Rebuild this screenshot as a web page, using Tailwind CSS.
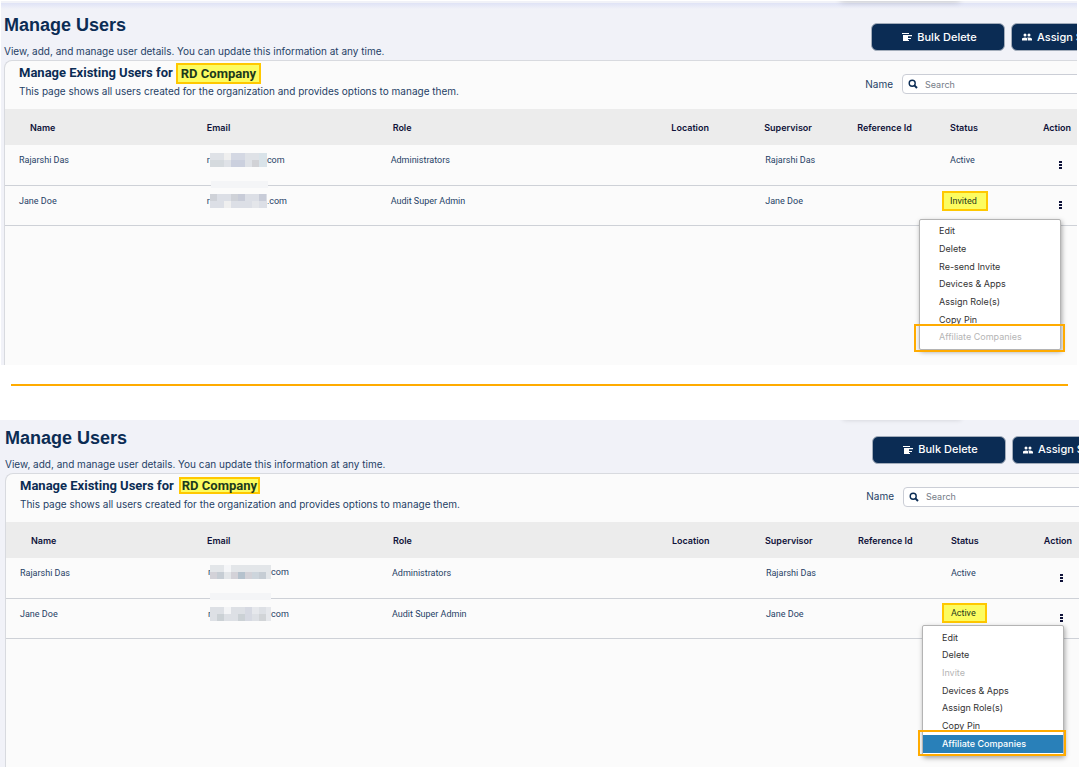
<!DOCTYPE html>
<html lang="en">
<head>
  <meta charset="UTF-8" />
  <meta name="viewport" content="width=device-width, initial-scale=1">
  <title>Manage Users</title>
  <script src="https://cdn.jsdelivr.net/npm/@tailwindcss/browser@4"></script>
</head>
<body class="bg-white font-['Inter',sans-serif] text-[#1f3f66] overflow-x-hidden">

  <!-- Invited user: affiliate companies disabled -->
  <section class="relative overflow-hidden mt-px ml-px mr-[2px] pl-[3px] pt-[11px] bg-[#f1f2f8]">
    <div class="absolute inset-x-0 top-[2px] h-[6px] bg-linear-to-b from-[#dfe3f6] to-[#f1f2f8]"></div>
    <div class="absolute -top-2 right-[117px] w-[120px] h-2 rounded-full shadow-[0_1px_6px_#0000002e]"></div>
    <header class="relative flex justify-between pb-[2px]">
      <div>
        <h1 class="font-['Liberation_Sans',sans-serif] font-bold text-[18px] leading-[26px] text-[#0b2c54]">Manage Users</h1>
        <p class="mt-[6px] text-[10px] leading-[14px]">View, add, and manage user details. You can update this information at any time.</p>
      </div>
      <div class="flex shrink-0 gap-[6px] mt-[11px] -mr-17">
        <button type="button" class="flex items-center justify-center gap-[5px] w-[134px] h-7 pl-[3px] rounded-md border border-[#a3adbb] bg-[#0b2c54] text-white text-[11px] font-medium">
          <svg class="w-[10px] h-[10px]" viewBox="0 0 10 10" fill="currentColor"><path d="M0 1h7v1H0zM1 3h9v1.300H1zM1 4h5v5H1zM6 6h3v1H6zM6 8h1v1H6z"/></svg>
          Bulk Delete
        </button>
        <button type="button" class="flex items-center gap-[5px] w-[134px] h-7 pl-[10px] rounded-md border border-[#a3adbb] bg-[#0b2c54] text-white text-[11px] font-medium whitespace-nowrap">
          <svg class="w-[10px] h-[10px]" viewBox="0 0 10 10" fill="currentColor"><circle cx="3" cy="3" r="1.500"/><circle cx="7" cy="3" r="1.500"/><path d="M0 8.500V7q0-1.500 3-1.500 1.500 0 2 .8V8.500zM5.700 8.500V7q0-1-.6-1.400 4.900-.6 4.900 1.400v1.500z"/></svg>
          Assign Supervisor
        </button>
      </div>
    </header>

    <div class="relative border-l border-t border-[#d8dadf] rounded-tl-lg bg-[#fbfbfb] pb-[139px]">
      <div class="flex justify-between pl-[14px] pb-3">
        <div>
          <h2 class="flex items-center gap-[3px] h-6 font-[Roboto,sans-serif] font-bold text-[13px] text-[#0b2c54]">Manage Existing Users for<mark class="border-2 border-[#ffc800] bg-[#fcfc60] px-[3px] leading-[17px] text-[#1c3a1c]">RD Company</mark></h2>
          <p class="text-[10px] leading-3">This page shows all users created for the organization and provides options to manage them.</p>
        </div>
        <div class="flex items-center shrink-0 gap-[9px] h-5 mt-[13px] -mr-17">
          <label for="search-invited" class="text-[10px]">Name</label>
          <div class="relative">
            <svg class="absolute left-[6px] top-[5px] w-[10px] h-[10px] text-[#0b2c54]" viewBox="0 0 10 10" fill="none" stroke="currentColor" stroke-width="1.400"><circle cx="4.200" cy="4.200" r="3"/><path d="M6.400 6.400L9 9" stroke-width="2"/></svg>
            <input id="search-invited" type="text" placeholder="Search" class="block w-[243px] h-5 rounded-sm border border-[#cbced6] bg-white pl-[22px] text-[9px] placeholder:text-[#757c87]">
          </div>
        </div>
      </div>

      <table class="w-[104%] table-fixed text-left text-[9px] leading-3">
        <thead>
          <tr class="h-9 bg-[#ececec] text-[#10133a]">
            <th class="w-2/12 pt-[2px] pl-[25px] font-semibold">Name</th>
            <th class="w-2/12 pt-[2px] pl-4 font-semibold">Email</th>
            <th class="w-3/12 pt-[2px] pl-4 font-semibold">Role</th>
            <th class="w-1/12 pt-[2px] pl-4 font-semibold">Location</th>
            <th class="w-1/12 pt-[2px] pl-4 font-semibold">Supervisor</th>
            <th class="w-1/12 pt-[2px] pl-4 font-semibold">Reference Id</th>
            <th class="w-1/12 pt-[2px] pl-4 font-semibold">Status</th>
            <th class="w-1/12 pt-[2px] pl-4 font-semibold">Action</th>
          </tr>
        </thead>
        <tbody>
          <tr class="h-10 border-b border-[#ced1d7] align-top font-[Roboto,sans-serif]">
            <td class="pl-[14px] pt-[9px]">Rajarshi Das</td>
            <td class="relative pl-4 pt-2">
              <div class="flex items-center">r<svg class="w-[57px] h-[14px]" viewBox="0 0 57 14" shape-rendering="crispEdges"><path fill="#dfe2e7" d="M0 0h57v14H0z"/><path fill="#d5dade" d="M0 7h14v7H0z"/><path fill="#efefef" d="M14 0h7v7h-7z"/><path fill="#d4d8e3" d="M21 0h14v7H21z"/><path fill="#cbd0de" d="M21 7h14v7H21z"/><path fill="#d1d2d6" d="M42 7h7v7h-7z"/><path fill="#d9e3e9" d="M49 0h8v14h-8z"/></svg>com</div>
              <div class="absolute left-5 -bottom-[3px] w-[57px] h-[7px] bg-[#f4f5f7]"></div>
            </td>
            <td class="pl-[14px] pt-[9px]">Administrators</td>
            <td></td>
            <td class="pl-[17px] pt-[9px]">Rajarshi Das</td>
            <td></td>
            <td class="pl-4 pt-[9px]">Active</td>
            <td class="pl-8 pt-4"><button type="button" aria-label="Actions" class="block"><svg class="w-[3px] h-[9px]" viewBox="0 0 3 9" fill="#10133a"><path d="M0 0h3v2H0zM0 3h3v2H0zM0 6h3v2H0z"/></svg></button></td>
          </tr>
          <tr class="h-10 border-b border-[#ced1d7] align-top font-[Roboto,sans-serif]">
            <td class="pl-[14px] pt-[9px]">Jane Doe</td>
            <td class="pl-4 pt-2">
              <div class="flex items-center">r<svg class="w-[57px] h-[14px]" viewBox="0 0 57 14" shape-rendering="crispEdges"><path fill="#dcdfe6" d="M0 0h57v14H0z"/><path fill="#cfd2d8" d="M0 0h7v7H0zM21 0h7v7h-7z"/><path fill="#efefef" d="M14 7h7v7h-7z"/><path fill="#c8ccd8" d="M28 0h7v7h-7zM49 0h7v7h-7z"/><path fill="#e4e6ea" d="M42 7h7v7h-7z"/></svg>.com</div>
            </td>
            <td class="pl-[14px] pt-[9px]">Audit Super Admin</td>
            <td></td>
            <td class="pl-[17px] pt-[9px]">Jane Doe</td>
            <td></td>
            <td class="pl-2 pt-[5px]"><mark class="block w-[46px] border-2 border-[#ffc800] bg-[#fcfc60] pl-[6px] leading-4 text-[#1c3a1c]">Invited</mark></td>
            <td class="pl-8 pt-[15px]"><button type="button" aria-label="Actions" class="block"><svg class="w-[3px] h-[9px]" viewBox="0 0 3 9" fill="#10133a"><path d="M0 0h3v2H0zM0 3h3v2H0zM0 6h3v2H0z"/></svg></button></td>
          </tr>
        </tbody>
      </table>

      <div class="absolute top-[158px] right-4 w-[142px] h-[131px] pt-[2px] pb-[3px] flex flex-col border border-[#b4b4b4] rounded-xs bg-white shadow-[1px_2px_5px_#00000059] text-[9px] text-[#333]">
        <button type="button" class="flex-1 pl-[19px] text-left">Edit</button>
        <button type="button" class="flex-1 pl-[19px] text-left">Delete</button>
        <button type="button" class="flex-1 pl-[19px] text-left">Re-send Invite</button>
        <button type="button" class="flex-1 pl-[19px] text-left">Devices &amp; Apps</button>
        <button type="button" class="flex-1 pl-[19px] text-left">Assign Role(s)</button>
        <button type="button" class="flex-1 pl-[19px] text-left">Copy Pin</button>
        <button type="button" disabled class="flex-1 pl-[19px] text-left text-[#b5b5b5]">Affiliate Companies</button>
        <div class="absolute -left-[6px] -right-[5px] -bottom-[3px] h-7 border-2 border-[#ffab00] pointer-events-none"></div>
      </div>
    </div>
  </section>

  <hr class="mt-[19px] mb-[34px] ml-[11px] mr-[11px] border-t-2 border-[#ffab00]">

  <!-- Active user: affiliate companies enabled -->
  <section class="relative overflow-hidden pl-[5px] pt-[5px] bg-[#f1f2f8]">
    <div class="absolute -top-2 right-[117px] w-[120px] h-2 rounded-full shadow-[0_0_5px_#00000024]"></div>
    <header class="relative flex justify-between pb-[2px]">
      <div>
        <h1 class="font-['Liberation_Sans',sans-serif] font-bold text-[18px] leading-[26px] text-[#0b2c54]">Manage Users</h1>
        <p class="mt-[6px] text-[10px] leading-[14px]">View, add, and manage user details. You can update this information at any time.</p>
      </div>
      <div class="flex shrink-0 gap-[6px] mt-[11px] -mr-[67px]">
        <button type="button" class="flex items-center justify-center gap-[5px] w-[134px] h-7 pl-[3px] rounded-md border border-[#a3adbb] bg-[#0b2c54] text-white text-[11px] font-medium">
          <svg class="w-[10px] h-[10px]" viewBox="0 0 10 10" fill="currentColor"><path d="M0 1h7v1H0zM1 3h9v1.300H1zM1 4h5v5H1zM6 6h3v1H6zM6 8h1v1H6z"/></svg>
          Bulk Delete
        </button>
        <button type="button" class="flex items-center gap-[5px] w-[134px] h-7 pl-[10px] rounded-md border border-[#a3adbb] bg-[#0b2c54] text-white text-[11px] font-medium whitespace-nowrap">
          <svg class="w-[10px] h-[10px]" viewBox="0 0 10 10" fill="currentColor"><circle cx="3" cy="3" r="1.500"/><circle cx="7" cy="3" r="1.500"/><path d="M0 8.500V7q0-1.500 3-1.500 1.500 0 2 .8V8.500zM5.700 8.500V7q0-1-.6-1.400 4.900-.6 4.900 1.400v1.500z"/></svg>
          Assign Supervisor
        </button>
      </div>
    </header>

    <div class="relative border-l border-t border-[#d8dadf] rounded-tl-lg bg-[#fbfbfb] pb-32">
      <div class="flex justify-between pl-[14px] pb-3">
        <div>
          <h2 class="flex items-center gap-[5px] h-6 font-[Roboto,sans-serif] font-bold text-[13px] text-[#0b2c54]">Manage Existing Users for<mark class="border-2 border-[#ffc800] bg-[#fcfc60] px-px leading-[13px] text-[#1c3a1c]">RD Company</mark></h2>
          <p class="text-[10px] leading-3">This page shows all users created for the organization and provides options to manage them.</p>
        </div>
        <div class="flex items-center shrink-0 gap-[9px] h-5 mt-[13px] -mr-[67px]">
          <label for="search-active" class="text-[10px]">Name</label>
          <div class="relative">
            <svg class="absolute left-[6px] top-[5px] w-[10px] h-[10px] text-[#0b2c54]" viewBox="0 0 10 10" fill="none" stroke="currentColor" stroke-width="1.400"><circle cx="4.200" cy="4.200" r="3"/><path d="M6.400 6.400L9 9" stroke-width="2"/></svg>
            <input id="search-active" type="text" placeholder="Search" class="block w-[243px] h-5 rounded-sm border border-[#cbced6] bg-white pl-[22px] text-[9px] placeholder:text-[#757c87]">
          </div>
        </div>
      </div>

      <table class="w-[104%] table-fixed text-left text-[9px] leading-3">
        <thead>
          <tr class="h-9 bg-[#ececec] text-[#10133a]">
            <th class="w-2/12 pt-[2px] pl-[25px] font-semibold">Name</th>
            <th class="w-2/12 pt-[2px] pl-[15px] font-semibold">Email</th>
            <th class="w-3/12 pt-[2px] pl-[15px] font-semibold">Role</th>
            <th class="w-1/12 pt-[2px] pl-[15px] font-semibold">Location</th>
            <th class="w-1/12 pt-[2px] pl-[15px] font-semibold">Supervisor</th>
            <th class="w-1/12 pt-[2px] pl-[15px] font-semibold">Reference Id</th>
            <th class="w-1/12 pt-[2px] pl-[15px] font-semibold">Status</th>
            <th class="w-1/12 pt-[2px] pl-[15px] font-semibold">Action</th>
          </tr>
        </thead>
        <tbody>
          <tr class="h-[41px] border-b border-[#ced1d7] align-top font-[Roboto,sans-serif]">
            <td class="pl-[14px] pt-[9px]">Rajarshi Das</td>
            <td class="relative pl-4 pt-[7px]">
              <div class="flex items-center">r<svg class="w-[61px] h-[14px] -ml-px" viewBox="0 0 61 14" shape-rendering="crispEdges"><path fill="#e3e6e9" d="M0 0h61v14H0z"/><path fill="#f5f6f8" d="M14 0h7v7h-7z"/><path fill="#c6cdd4" d="M7 7h7v7H7zM49 7h7v7h-7z"/><path fill="#b5c2cd" d="M28 7h7v7h-7z"/><path fill="#d3d2d8" d="M0 7h7v7H0zM21 7h7v7h-7zM35 7h7v7h-7z"/><path fill="#cdd5dc" d="M42 7h7v7h-7z"/></svg>com</div>
              <div class="absolute left-[18px] -bottom-[2px] w-[61px] h-[7px] bg-[#f4f5f7]"></div>
            </td>
            <td class="pl-[14px] pt-[9px]">Administrators</td>
            <td></td>
            <td class="pl-4 pt-[9px]">Rajarshi Das</td>
            <td></td>
            <td class="pl-[15px] pt-[9px]">Active</td>
            <td class="pl-[31px] pt-4"><button type="button" aria-label="Actions" class="block"><svg class="w-[3px] h-[9px]" viewBox="0 0 3 9" fill="#10133a"><path d="M0 0h3v2H0zM0 3h3v2H0zM0 6h3v2H0z"/></svg></button></td>
          </tr>
          <tr class="h-10 border-b border-[#ced1d7] align-top font-[Roboto,sans-serif]">
            <td class="pl-[14px] pt-[9px]">Jane Doe</td>
            <td class="pl-4 pt-2">
              <div class="flex items-center">r<svg class="w-[61px] h-[14px] -ml-px" viewBox="0 0 61 14" shape-rendering="crispEdges"><path fill="#dde0e5" d="M0 0h61v14H0z"/><path fill="#f3f4f6" d="M14 0h7v7h-7z"/><path fill="#cbd1d5" d="M7 7h7v7H7zM28 7h7v7h-7z"/><path fill="#d6d9e2" d="M35 0h7v14h-7z"/><path fill="#d1d4d7" d="M49 7h7v7h-7z"/><path fill="#e6e8ec" d="M42 0h7v7h-7zM56 0h5v14h-5z"/></svg>com</div>
            </td>
            <td class="pl-[14px] pt-[9px]">Audit Super Admin</td>
            <td></td>
            <td class="pl-4 pt-[9px]">Jane Doe</td>
            <td></td>
            <td class="pl-[6px] pt-1"><mark class="block w-[45px] border-2 border-[#ffc800] bg-[#fcfc60] pl-[7px] leading-4 text-[#1c3a1c]">Active</mark></td>
            <td class="pl-[31px] pt-[15px]"><button type="button" aria-label="Actions" class="block"><svg class="w-[3px] h-[9px]" viewBox="0 0 3 9" fill="#10133a"><path d="M0 0h3v2H0zM0 3h3v2H0zM0 6h3v2H0z"/></svg></button></td>
          </tr>
        </tbody>
      </table>

      <div class="absolute top-[151px] right-[15px] w-[142px] h-[131px] pt-[3px] pb-[2px] flex flex-col border border-[#b4b4b4] rounded-xs bg-white shadow-[1px_2px_5px_#00000059] text-[9px] text-[#333]">
        <button type="button" class="flex-1 pl-[19px] text-left">Edit</button>
        <button type="button" class="flex-1 pl-[19px] text-left">Delete</button>
        <button type="button" disabled class="flex-1 pl-[19px] text-left text-[#b5b5b5]">Invite</button>
        <button type="button" class="flex-1 pl-[19px] text-left">Devices &amp; Apps</button>
        <button type="button" class="flex-1 pl-[19px] text-left">Assign Role(s)</button>
        <button type="button" class="flex-1 pl-[19px] text-left">Copy Pin</button>
        <button type="button" class="flex-1 pl-[19px] text-left font-medium bg-[#2980b9] text-white">Affiliate Companies</button>
        <div class="absolute -left-[5px] -right-[3px] -bottom-px h-[26px] border-2 border-[#ffab00] pointer-events-none"></div>
      </div>
    </div>
  </section>

</body>
</html>
